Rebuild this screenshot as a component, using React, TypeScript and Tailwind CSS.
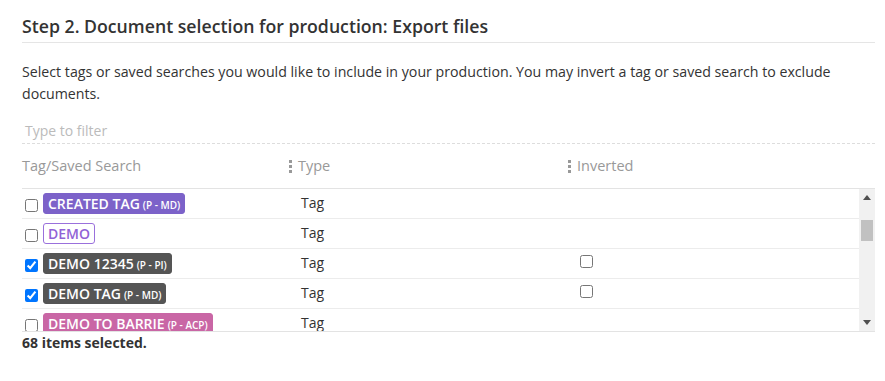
import React from 'react'

type Row = {
  name: string
  code?: string
  style: 'purple' | 'outline' | 'dark' | 'pink'
  checked: boolean
  invertable: boolean
}

const rows: Row[] = [
  { name: 'CREATED TAG', code: '(P - MD)', style: 'purple', checked: false, invertable: false },
  { name: 'DEMO', style: 'outline', checked: false, invertable: false },
  { name: 'DEMO 12345', code: '(P - PI)', style: 'dark', checked: true, invertable: true },
  { name: 'DEMO TAG', code: '(P - MD)', style: 'dark', checked: true, invertable: true },
  { name: 'DEMO TO BARRIE', code: '(P - ACP)', style: 'pink', checked: false, invertable: false },
]

const chipStyles = {
  purple: 'bg-[#7c62c9] text-white border border-[#7c62c9]',
  outline: 'bg-white text-[#9163d6] border border-[#9a70dc]',
  dark: 'bg-[#555555] text-white border border-[#555555]',
  pink: 'bg-[#c966a5] text-white border border-[#c966a5]',
}

function Grip() {
  return (
    <span className="flex flex-col gap-[2px] mr-[6px]">
      <span className="w-[3px] h-[3px] bg-[#999]" />
      <span className="w-[3px] h-[3px] bg-[#999]" />
      <span className="w-[3px] h-[3px] bg-[#999]" />
    </span>
  )
}

function Chip({ row }: { row: Row }) {
  return (
    <span
      className={`inline-flex items-baseline h-[21px] px-[4px] rounded-[3px] font-semibold text-[14px] leading-[19px] ${chipStyles[row.style]}`}
    >
      {row.name}
      {row.code && <span className="ml-[3px] text-[10px]">{row.code}</span>}
    </span>
  )
}

export default function App() {
  return (
    <div
      className="w-[885px] h-[381px] bg-white text-[#333] pl-[22px] pr-[10px] pt-[14px]"
      style={{ fontFamily: '"Open Sans", "Noto Sans", sans-serif' }}
    >
      <h2 className="text-[17.7px] font-semibold leading-[24px] pb-[4px] border-b border-[#e5e5e5]">
        Step 2. Document selection for production: Export files
      </h2>

      <p className="mt-[18px] text-[14.2px] leading-[22px]">
        Select tags or saved searches you would like to include in your production. You may invert a tag or saved
        search to exclude documents.
      </p>

      <div className="mt-[12px] h-[27px] pl-[3px] flex items-center text-[14px] text-[#bbb] border-b border-dashed border-[#ddd]">
        Type to filter
      </div>

      <div>
        <div className="flex h-[45px] items-center text-[14.5px] text-[#999] border-b border-[#e3e3e3]">
          <div className="w-[267px]">Tag/Saved Search</div>
          <div className="w-[279px] flex items-center">
            <Grip />
            Type
          </div>
          <div className="flex items-center">
            <Grip />
            Inverted
          </div>
        </div>

        <div className="flex h-[143px] border-b border-[#e3e3e3]">
          <div className="flex-1 overflow-hidden">
            {rows.map((row) => (
              <div key={row.name} className="flex items-center h-[30px] border-b border-[#ececec] text-[14px]">
                <div className="w-[267px] flex items-center">
                  <input
                    type="checkbox"
                    defaultChecked={row.checked}
                    className="w-[13px] h-[13px] ml-[3px] mr-[5px] mt-[4px]"
                  />
                  <Chip row={row} />
                </div>
                <div className="w-[279px] pl-[12px] leading-[20px] pb-[2px]">Tag</div>
                <div className="pl-[12px] flex items-center">
                  {row.invertable && <input type="checkbox" className="w-[13px] h-[13px] mb-[4px]" />}
                </div>
              </div>
            ))}
          </div>
          <div className="w-[16px] bg-[#f1f1f1] flex flex-col items-center">
            <div className="h-[17px] flex items-center justify-center">
              <svg width="8" height="5" viewBox="0 0 8 5">
                <path d="M0 5 L4 0 L8 5 Z" fill="#505050" />
              </svg>
            </div>
            <div className="mt-[14px] w-[12px] h-[21px] bg-[#c1c1c1]" />
            <div className="flex-1" />
            <div className="h-[17px] flex items-center justify-center">
              <svg width="8" height="5" viewBox="0 0 8 5">
                <path d="M0 0 L8 0 L4 5 Z" fill="#505050" />
              </svg>
            </div>
          </div>
        </div>
      </div>

      <div className="text-[14px] font-bold leading-[22px]">68 items selected.</div>
    </div>
  )
}
